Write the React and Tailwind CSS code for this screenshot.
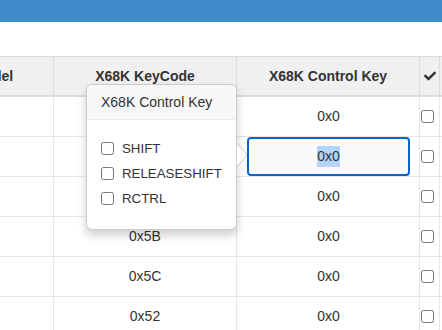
import React from 'react';
import { FaCheck } from 'react-icons/fa';

// first three key codes sit under the popover, so they are left blank
const rows = [
  { code: '', ctrl: '0x0' },
  { code: '', ctrl: '0x0', editing: true },
  { code: '', ctrl: '0x0' },
  { code: '0x5B', ctrl: '0x0' },
  { code: '0x5C', ctrl: '0x0' },
  { code: '0x52', ctrl: '0x0' },
];

const options = ['SHIFT', 'RELEASESHIFT', 'RCTRL'];

function ControlKeyPopover() {
  return (
    <div className="absolute left-[86px] top-[84px] w-[151px] h-[146px] bg-white border border-[rgba(0,0,0,0.2)] rounded-[6px] shadow-[0_5px_10px_rgba(0,0,0,0.2)]">
      <div className="h-[35px] flex items-center px-[14px] bg-[#f7f7f7] border-b border-[#ebebeb] rounded-t-[5px] text-[14px] text-[#333]">
        X68K Control Key
      </div>
      <div className="pt-[16px] px-[14px]">
        {options.map(opt => (
          <label key={opt} className="h-[25px] flex items-center gap-[8px] text-[13.3px] text-[#333]">
            <input type="checkbox" readOnly className="w-[13px] h-[13px] m-0" />
            {opt}
          </label>
        ))}
      </div>
      {/* arrow pointing at the cell being edited */}
      <div className="absolute right-[-12px] top-[58px] w-0 h-0 border-y-[12px] border-y-transparent border-l-[11px] border-l-[rgba(0,0,0,0.22)]" />
      <div className="absolute right-[-11px] top-[59px] w-0 h-0 border-y-[11px] border-y-transparent border-l-[10px] border-l-white" />
    </div>
  );
}

export default function App() {
  return (
    <div className="relative w-[442px] h-[330px] overflow-hidden bg-white text-[#333] font-['Liberation_Sans',Arial,sans-serif]">
      <div className="h-[22px] bg-[#428bca]" />
      <div className="h-[34px]" />

      <div className="ml-[-67px] w-[560px]">
        <div className="flex h-[41px] bg-[#f0f0f0] border-t border-b-2 border-[#dcdcdc] text-[14px] font-bold">
          <div className="w-[121px] flex items-center justify-center border-r border-[#dcdcdc]">Model</div>
          <div className="w-[183px] flex items-center justify-center border-r border-[#dcdcdc]">X68K KeyCode</div>
          <div className="w-[183px] flex items-center justify-center border-r border-[#dcdcdc]">X68K Control Key</div>
          <div className="w-[20px] flex items-center justify-center border-r border-[#dcdcdc]">
            <FaCheck className="w-[12px] h-[12px] text-[#333]" />
          </div>
          <div className="flex-1" />
        </div>

        {rows.map((r, i) => (
          <div key={i} className="flex h-[40px] border-b border-[#e6e6e6] text-[14px]">
            <div className="w-[121px] border-r border-[#e6e6e6]" />
            <div className="w-[183px] flex items-center justify-center border-r border-[#e6e6e6]">{r.code}</div>
            <div className="w-[183px] flex items-center justify-center border-r border-[#e6e6e6] pl-[10px] pr-[9px]">
              {r.editing ? (
                <div className="w-full h-[39px] flex items-center justify-center border-2 border-[#0a64d0] rounded-[4px] bg-[#fafafa]">
                  <span className="bg-[#b3d4fc]">{r.ctrl}</span>
                </div>
              ) : (
                r.ctrl
              )}
            </div>
            <div className="w-[20px] flex items-center pl-[1px] border-r border-[#e6e6e6]">
              <input type="checkbox" readOnly className="w-[13px] h-[13px] m-0" />
            </div>
            <div className="flex-1" />
          </div>
        ))}
      </div>

      <ControlKeyPopover />
    </div>
  );
}
